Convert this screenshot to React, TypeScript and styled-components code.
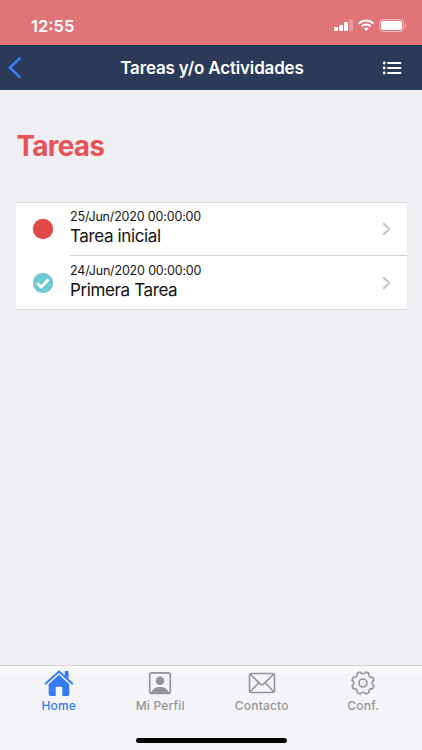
import React from "react";
import styled, { createGlobalStyle } from "styled-components";

const Global = createGlobalStyle`
  * { box-sizing: border-box; }
  body { margin: 0; background: #efeff4; font-family: Inter, "Liberation Sans", sans-serif; }
`;

const Screen = styled.div`
  display: flex;
  flex-direction: column;
  width: 422px;
  height: 750px;
  overflow: hidden;
  background: #efeff4;
`;

const StatusBar = styled.div`
  display: flex;
  justify-content: space-between;
  height: 45px;
  padding: 17px 14px 0 31px;
  background: #df7577;
  color: #fff;
`;

const Clock = styled.span`
  font-size: 16.5px;
  line-height: 18px;
  font-weight: 600;
  letter-spacing: 0;
`;

const NavBar = styled.header`
  display: grid;
  grid-template-columns: 60px 1fr 58px;
  align-items: center;
  height: 45px;
  background: #2b3a59;
  color: #fff;
`;

const NavTitle = styled.h1`
  margin: 0;
  font-size: 17px;
  line-height: 24px;
  font-weight: 600;
  text-align: center;
  white-space: nowrap;
  letter-spacing: -0.17px;
`;

const IconButton = styled.button<{ $pad: string }>`
  display: flex;
  border: 0;
  background: none;
  padding: ${(p) => p.$pad};
`;

const Content = styled.main`
  flex: 1;
  padding: 38px 15px 0 16px;
`;

const Heading = styled.h2`
  margin: 0 0 38px;
  padding-left: 0.5px;
  font-size: 28px;
  line-height: 36px;
  font-weight: 700;
  letter-spacing: -0.8px;
  color: #e65456;
`;

const List = styled.ul`
  list-style: none;
  margin: 0;
  padding: 0;
  background: #fff;
  border-top: 1px solid #dcdce0;
  border-bottom: 1px solid #dcdce0;
`;

const Row = styled.li`
  display: flex;
  height: 52px;
  padding-left: 16px;
  & + & { height: 54px; }
  & + & > div { border-top: 1px solid #d3d3d6; }
  & + & > svg { margin-top: 2px; }
`;

const StatusIcon = styled.svg`
  flex: none;
  align-self: center;
  margin-right: 16px;
`;

const RowBody = styled.div`
  flex: 1;
  display: flex;
  align-items: center;
  justify-content: space-between;
  padding-right: 16px;
`;

const TaskText = styled.div`
  padding-bottom: 2px;
`;

const DateText = styled.div`
  font-size: 12.5px;
  line-height: 16px;
  letter-spacing: -0.17px;
  color: #151515;
  white-space: nowrap;
`;

const TaskName = styled.div`
  font-size: 17px;
  line-height: 22px;
  letter-spacing: -0.38px;
  color: #111;
  white-space: nowrap;
`;

const TabBar = styled.nav`
  display: flex;
  flex-direction: column;
  align-items: center;
  height: 85px;
  border-top: 1px solid #d3d3d8;
  background: linear-gradient(#f8f8fa 0 7px, #f3f4f7 8px, #f5f5f9 70%);
`;

const Tabs = styled.div`
  align-self: stretch;
  display: grid;
  grid-template-columns: repeat(4, 101.5px);
  height: 50px;
  padding-left: 8px;
`;

const Tab = styled.a<{ $active?: boolean }>`
  display: flex;
  flex-direction: column;
  align-items: center;
  padding-top: 3px;
  gap: 1px;
  color: ${(p) => (p.$active ? "#357bf5" : "#949497")};
`;

const TabLabel = styled.span`
  font-size: 12px;
  line-height: 16px;
  font-weight: 500;
  letter-spacing: 0.2px;
  white-space: nowrap;
`;

const HomeIndicator = styled.div`
  width: 151px;
  height: 5px;
  margin-top: 22px;
  border-radius: 3px;
  background: #000;
`;

const gearPath = (() => {
  const outer = 11.3;
  const pt = (deg: number) => {
    const a = (deg * Math.PI) / 180;
    return `${(15 + outer * Math.sin(a)).toFixed(2)} ${(14 - outer * Math.cos(a)).toFixed(2)}`;
  };
  let d = `M${pt(-13.5)}`;
  for (let c = 0; c < 360; c += 45) {
    d += `A2.84 2.84 0 0 0 ${pt(c + 13.5)}A${outer} ${outer} 0 0 1 ${pt(c + 31.5)}`;
  }
  return d + "Z";
})();

const StatusIcons = () => (
  <svg width="74" height="18" viewBox="0 0 74 18" fill="#fff">
    <rect x="0" y="10" width="4" height="4" rx="1" />
    <rect x="5" y="8" width="4" height="6" rx="1" />
    <rect x="10" y="5" width="4" height="9" rx="1" />
    <rect x="15" y="2.500" width="4" height="11.500" rx="1" opacity=".3" />
    <g fill="none" stroke="#fff" strokeWidth="2.100">
      <path d="M24.800 6.400a10.800 10.800 0 0 1 14.600 0" />
      <path d="M27.600 9.300a6.700 6.700 0 0 1 9 0" />
    </g>
    <path d="M29.700 11.600a3.700 3.700 0 0 1 4.800 0L32.100 14z" />
    <rect x="45.500" y="2.500" width="24" height="12" rx="3.500" fill="none" stroke="#fff" opacity=".5" />
    <rect x="47" y="4" width="21" height="9" rx="2" />
    <path d="M71 6.500v4c1.800-.6 1.800-3.400 0-4z" opacity=".5" />
  </svg>
);

const HomeIcon = () => (
  <svg width="30" height="28" viewBox="0 0 30 28" fill="currentColor">
    <path d="M1.800 14.600L15 2.400l13.200 12.200" fill="none" stroke="currentColor" strokeWidth="2" strokeLinecap="round" strokeLinejoin="round" />
    <path d="M20.800 2h3.700v8l-3.700-3.500z" />
    <path d="M15 5.800l10.300 9.500v9.700q0 2-2 2h-5v-8.500q0-.8-.8-.8h-5q-.8 0-.8.8V27h-5q-2 0-2-2v-9.700z" />
  </svg>
);

const ProfileIcon = () => (
  <svg width="30" height="28" viewBox="0 0 30 28" fill="currentColor">
    <rect x="4.700" y="3.900" width="20.600" height="20.600" rx="2" fill="none" stroke="currentColor" strokeWidth="1.700" />
    <circle cx="15" cy="11.700" r="4.300" />
    <path d="M6 24c2-4.600 5-6 9-6s7 1.400 9 6z" />
  </svg>
);

const MailIcon = () => (
  <svg width="30" height="28" viewBox="0 0 30 28" fill="none" stroke="currentColor" strokeWidth="1.600" strokeLinejoin="round">
    <rect x="2.500" y="4.500" width="25" height="19" rx="2" />
    <path d="M3 5l10.800 10.300q1.200 1 2.400 0L27 5M3 23l8.700-9.200M27 23l-8.700-9.200" />
  </svg>
);

const GearIcon = () => (
  <svg width="30" height="28" viewBox="0 0 30 28" fill="none" stroke="currentColor" strokeWidth="1.600" strokeLinejoin="round">
    <path d={gearPath} />
    <circle cx="15" cy="14" r="4" />
  </svg>
);

const tasks = [
  { date: "25/Jun/2020 00:00:00", name: "Tarea inicial", done: false },
  { date: "24/Jun/2020 00:00:00", name: "Primera Tarea", done: true },
];

const tabs = [
  { label: "Home", Icon: HomeIcon, active: true },
  { label: "Mi Perfil", Icon: ProfileIcon },
  { label: "Contacto", Icon: MailIcon },
  { label: "Conf.", Icon: GearIcon },
];

export default function App() {
  return (
    <Screen>
      <Global />
      <StatusBar>
        <Clock>12:55</Clock>
        <StatusIcons />
      </StatusBar>
      <NavBar>
        <IconButton $pad="0 0 0 8px" aria-label="Atrás">
          <svg width="14" height="22" viewBox="0 0 14 22" fill="none" stroke="#3b7bf0" strokeWidth="2.700" strokeLinecap="round">
            <path d="M11.500 1.500L1.900 10.700l9.600 9.200" strokeLinejoin="miter" />
          </svg>
        </IconButton>
        <NavTitle>Tareas y/o Actividades</NavTitle>
        <IconButton $pad="0 0 0 18px" aria-label="Menú">
          <svg width="20" height="14" viewBox="0 0 20 14" stroke="#fff" fill="#fff" strokeWidth="1.800" strokeLinecap="round">
            <path d="M6 2H18.500M6 7H18.500M6 12H18.500" />
            <g stroke="none">
              <circle cx="2.200" cy="2" r="1.400" />
              <circle cx="2.200" cy="7" r="1.400" />
              <circle cx="2.200" cy="12" r="1.400" />
            </g>
          </svg>
        </IconButton>
      </NavBar>
      <Content>
        <Heading>Tareas</Heading>
        <List>
          {tasks.map((t) => (
            <Row key={t.name}>
              <StatusIcon width="22" height="22" viewBox="0 0 22 22">
                <circle cx="11" cy="11" r="10.200" fill={t.done ? "#72c8d3" : "#e04b49"} />
                {t.done && <path d="M5.300 11.200l4 3.800 7.200-7.600" fill="none" stroke="#fff" strokeWidth="2.800" />}
              </StatusIcon>
              <RowBody>
                <TaskText>
                  <DateText>{t.date}</DateText>
                  <TaskName>{t.name}</TaskName>
                </TaskText>
                <svg width="9" height="14" viewBox="0 0 9 14" fill="none" stroke="#c4c4c8" strokeWidth="2">
                  <path d="M1.300 1.200L7.300 7l-6 5.800" />
                </svg>
              </RowBody>
            </Row>
          ))}
        </List>
      </Content>
      <TabBar>
        <Tabs>
          {tabs.map(({ label, Icon, active }) => (
            <Tab key={label} $active={active}>
              <Icon />
              <TabLabel>{label}</TabLabel>
            </Tab>
          ))}
        </Tabs>
        <HomeIndicator />
      </TabBar>
    </Screen>
  );
}
